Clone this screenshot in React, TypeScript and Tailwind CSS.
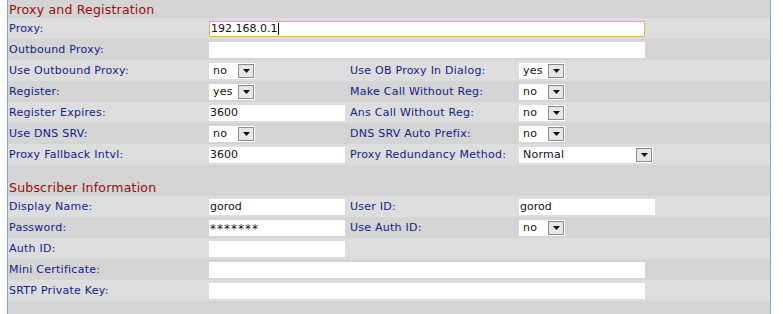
import React from 'react';

const DARK = 'bg-[#d4d4d4]';
const LIGHT = 'bg-[#dddddd]';

function Label({ children }: { children?: React.ReactNode }) {
  return <div className="pl-[1px] text-[11px] tracking-[0.25px] text-[#14208a] leading-none whitespace-nowrap">{children}</div>;
}

function TextBox({ value, w, focused, secret }: { value?: string; w: string; focused?: boolean; secret?: boolean }) {
  return (
    <div
      className={`${w} h-[16px] bg-white flex items-center text-[11px] text-[#111] leading-none pl-[1px] ${
        focused ? 'border border-[#eab35a]' : ''
      }`}
    >
      {secret ? <span className="text-[12px] tracking-[1px] pt-[3px]">{value}</span> : value}
      {focused && <span className="w-[1px] h-[12px] bg-black ml-[1px]" />}
    </div>
  );
}

function Select({ value, w = 'w-[46px]' }: { value: string; w?: string }) {
  return (
    <div className={`${w} h-[16px] bg-white flex items-center justify-between text-[11px] tracking-[0.25px] text-[#111] leading-none`}>
      <span className="pl-[4px]">{value}</span>
      <span className="w-[16px] h-[14px] mr-[1px] border border-[#8c8c8c] bg-[#e6e6e6] flex items-center justify-center">
        <svg width="7" height="4" viewBox="0 0 7 4">
          <path d="M0 0h7L3.5 4z" fill="#111" />
        </svg>
      </span>
    </div>
  );
}

type Cell = React.ReactNode;

function Row({ bg, cells, wide }: { bg: string; cells: Cell[]; wide?: boolean }) {
  return (
    <div className={`${bg} h-[21px] grid grid-cols-[201px_140px_170px_1fr] items-center`}>
      <Label>{cells[0]}</Label>
      {wide ? (
        <div className="col-span-3">{cells[1]}</div>
      ) : (
        <>
          <div>{cells[1]}</div>
          <Label>{cells[2]}</Label>
          <div>{cells[3]}</div>
        </>
      )}
    </div>
  );
}

function Title({ children }: { children: React.ReactNode }) {
  return (
    <div className={`${DARK} h-[18px] flex items-center pl-[1px] pt-[2px] text-[12.5px] tracking-[0.2px] text-[#9a0c0c] leading-none`}>
      {children}
    </div>
  );
}

export default function App() {
  return (
    <div className="w-[783px] h-[314px] bg-white flex overflow-hidden" style={{ fontFamily: '"DejaVu Sans", Verdana, sans-serif' }}>
      <div className="w-[7px]" />
      <div className="w-[1px] bg-[#7ea6dc]" />
      <div className="w-[762px] bg-[#d4d4d4] flex flex-col">
        <Title>Proxy and Registration</Title>
        <Row bg={LIGHT} wide cells={['Proxy:', <TextBox value="192.168.0.1" w="w-[436px]" focused />]} />
        <Row bg={DARK} wide cells={['Outbound Proxy:', <TextBox w="w-[436px]" />]} />
        <Row bg={LIGHT} cells={['Use Outbound Proxy:', <Select value="no" />, 'Use OB Proxy In Dialog:', <Select value="yes" />]} />
        <Row bg={DARK} cells={['Register:', <Select value="yes" />, 'Make Call Without Reg:', <Select value="no" />]} />
        <Row bg={LIGHT} cells={['Register Expires:', <TextBox value="3600" w="w-[136px]" />, 'Ans Call Without Reg:', <Select value="no" />]} />
        <Row bg={DARK} cells={['Use DNS SRV:', <Select value="no" />, 'DNS SRV Auto Prefix:', <Select value="no" />]} />
        <Row bg={LIGHT} cells={['Proxy Fallback Intvl:', <TextBox value="3600" w="w-[136px]" />, 'Proxy Redundancy Method:', <Select value="Normal" w="w-[134px]" />]} />
        <div className={`${DARK} h-[13px]`} />
        <Title>Subscriber Information</Title>
        <Row bg={LIGHT} cells={['Display Name:', <TextBox value="gorod" w="w-[136px]" />, 'User ID:', <TextBox value="gorod" w="w-[136px]" />]} />
        <Row bg={DARK} cells={['Password:', <TextBox value="*******" w="w-[136px]" secret />, 'Use Auth ID:', <Select value="no" />]} />
        <Row bg={LIGHT} cells={['Auth ID:', <TextBox w="w-[136px]" />, '', null]} />
        <Row bg={DARK} wide cells={['Mini Certificate:', <TextBox w="w-[436px]" />]} />
        <Row bg={LIGHT} wide cells={['SRTP Private Key:', <TextBox w="w-[436px]" />]} />
        <div className={`${DARK} flex-1`} />
      </div>
      <div className="w-[1px] bg-[#7ea6dc]" />
    </div>
  );
}
